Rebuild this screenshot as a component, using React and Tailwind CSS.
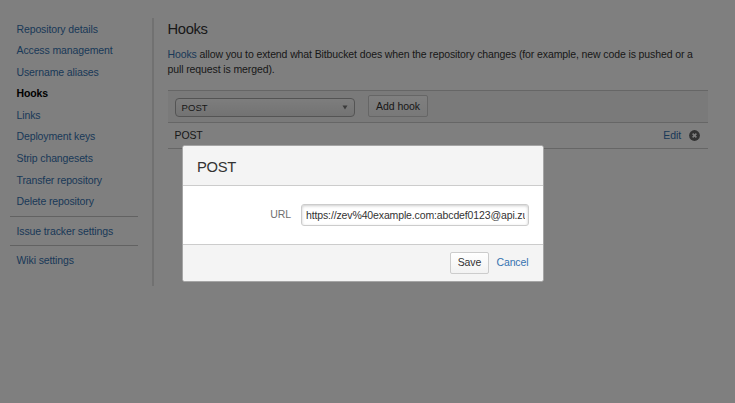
const links = [
  'Repository details',
  'Access management',
  'Username aliases',
  'Hooks',
  'Links',
  'Deployment keys',
  'Strip changesets',
  'Transfer repository',
  'Delete repository',
];

function Sidebar() {
  return (
    <nav className="h-[268px] w-[144px] shrink-0 border-r-2 border-[#e2e2e2] pr-[14px] text-[10.5px] tracking-[-0.12px] text-[#3572b0]">
      <ul className="pt-[0.5px] pb-[3.5px]">
        {links.map((label) => (
          <li
            key={label}
            className={
              label === 'Hooks'
                ? 'h-[21.6px] pl-[6.5px] leading-[21.6px] font-bold text-black'
                : 'h-[21.6px] pl-[6.5px] leading-[21.6px]'
            }
          >
            {label}
          </li>
        ))}
      </ul>
      <div className="h-[29px] border-t border-[#c4c4c4] pl-[6.5px] leading-[29px]">Issue tracker settings</div>
      <div className="h-[29px] border-t border-[#c4c4c4] pl-[6.5px] leading-[28px]">Wiki settings</div>
    </nav>
  );
}

function HookList() {
  return (
    <main className="ml-[13.5px] w-[540px] shrink-0 text-[10.5px] tracking-[-0.11px] text-[#333]">
      <h1 className="mt-px h-[20px] text-[14.75px] leading-[20px] tracking-[-0.35px]">Hooks</h1>
      <p className="mt-[8px] leading-[14.5px] whitespace-nowrap">
        <span className="text-[#3572b0]">Hooks</span> allow you to extend what Bitbucket does when the repository
        changes (for example, new code is pushed or a
        <br />
        pull request is merged).
      </p>
      <div className="mt-[14px] flex h-[33px] items-center border-y border-[#ccc] bg-[#f4f4f4] pl-[7px]">
        <div className="mt-px flex h-[19px] w-[180px] items-center justify-between rounded-[4px] border border-[#a8a8a8] bg-linear-to-b from-[#fbfbfb] to-[#e6e6e6] pr-[6px] pl-[6px] text-[9.5px]">
          <span className="pt-[2px] tracking-[0.1px]">POST</span>
          <svg width="6" height="5" viewBox="0 0 6 5">
            <path d="M0.5 0.5h5L3 4.5z" fill="#777" />
          </svg>
        </div>
        <div className="mb-px ml-[13.5px] flex h-[22px] w-[60px] items-center justify-center rounded-[2px] border border-[#ccc] bg-linear-to-b from-white to-[#f2f2f2] pt-px tracking-[-0.05px]">
          Add hook
        </div>
      </div>
      <div className="flex h-[26px] items-center border-b border-[#ccc] pr-[7.5px] pl-[7px]">
        <span className="flex-1">POST</span>
        <span className="mr-[8px] text-[#3572b0]">Edit</span>
        <svg width="11" height="11" viewBox="0 0 11 11">
          <circle cx="5.5" cy="5.5" r="5.4" fill="#666" />
          <path d="M3.6 3.6l3.8 3.8M7.4 3.6L3.6 7.4" stroke="#fff" strokeWidth="1.5" />
        </svg>
      </div>
    </main>
  );
}

function HookDialog() {
  return (
    <div className="absolute top-[145px] left-[182px] flex h-[137px] w-[362px] flex-col overflow-hidden rounded-[3px] border border-[#a5a5a5] bg-white text-[10.5px] tracking-[-0.1px] text-[#333]">
      <h2 className="h-[40px] border-b border-[#ccc] bg-[#f4f4f4] pl-[14px] text-[14.75px] leading-[43px] tracking-[-0.3px]">
        POST
      </h2>
      <div className="flex h-[58px] items-center">
        <label className="w-[108px] text-right text-[#707070]">URL</label>
        <input
          className="ml-[10px] h-[22px] w-[228px] rounded-[3px] border border-[#ccc] pr-[3px] pl-[4px] tracking-[-0.13px] shadow-[inset_0_1px_3px_#ccc] outline-none"
          defaultValue="https://zev%40example.com:abcdef0123@api.zulip.com"
        />
      </div>
      <div className="flex flex-1 items-center justify-end border-t border-[#ccc] bg-[#f4f4f4] pr-[14.5px]">
        <button className="h-[22px] w-[39px] rounded-[2px] border border-[#ccc] bg-linear-to-b from-white to-[#f2f2f2]">
          Save
        </button>
        <span className="ml-[7.5px] text-[#3572b0]">Cancel</span>
      </div>
    </div>
  );
}

export default function App() {
  return (
    <div className="relative h-[403px] w-[735px] overflow-hidden bg-white font-['Liberation_Sans',Arial,sans-serif]">
      <div className="flex pt-[18px] pl-[10px]">
        <Sidebar />
        <HookList />
      </div>
      <div className="absolute inset-0 bg-black/50" />
      <HookDialog />
    </div>
  );
}
